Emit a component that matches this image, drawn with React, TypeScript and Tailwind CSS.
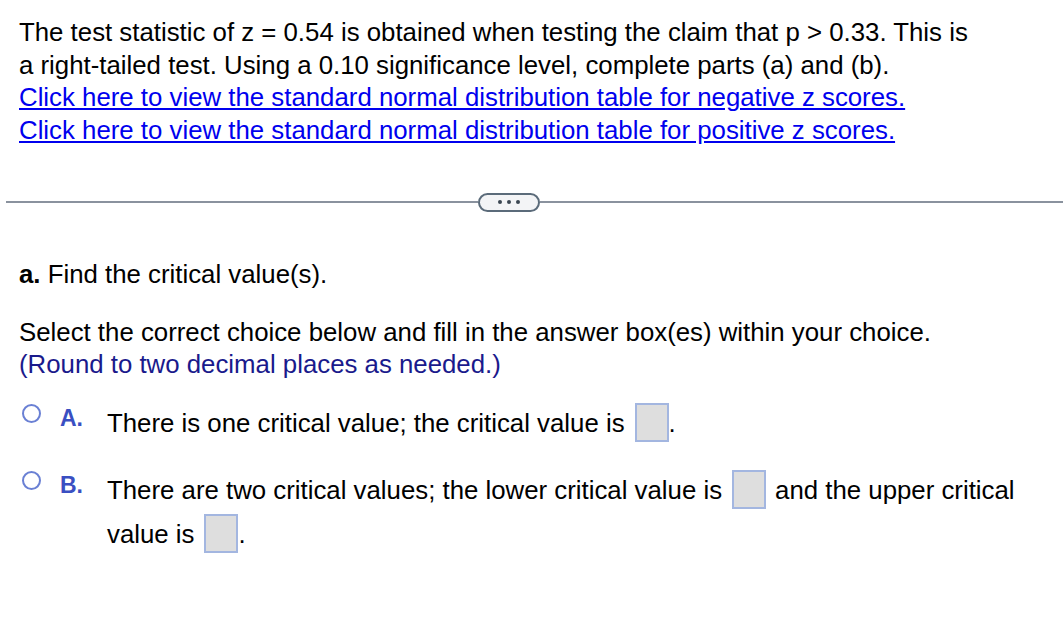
import React from "react";

const Box = ({ className = "" }: { className?: string }) => (
  <span className={`inline-block w-[34px] h-[39px] bg-[#dedede] border-2 border-[#a3b6e0] align-middle ${className}`} />
);

const Radio = () => (
  <span className="inline-block w-[19px] h-[19px] rounded-full border-[2.5px] border-[#6a80d4] bg-white mb-[18px]" />
);

const Label = ({ t }: { t: string }) => (
  <span className="ml-[19px] w-[47px] text-[#3a4fc2] font-bold text-[23px] mb-[10px]">{t}</span>
);

export default function App() {
  return (
    <div className="w-[1063px] h-[627px] bg-white overflow-hidden text-black" style={{ fontFamily: '"Liberation Sans", Arial, sans-serif' }}>
      <div className="pt-[16px] pl-[19px] text-[25.8px] leading-[32.7px]">
        <div>The test statistic of z = 0.54 is obtained when testing the claim that p &gt; 0.33. This is</div>
        <div>a right-tailed test. Using a 0.10 significance level, complete parts (a) and (b).</div>
        <div><a className="text-[#0000ee] underline">Click here to view the standard normal distribution table for negative z scores.</a></div>
        <div><a className="text-[#0000ee] underline">Click here to view the standard normal distribution table for positive z scores.</a></div>
      </div>
      <div className="mt-[46px] ml-[6px] flex items-center">
        <div className="w-[472px] h-[2px] bg-[#8a929e]" />
        <div className="w-[62px] h-[19px] rounded-full border-2 border-[#5b6b7a] bg-[#f3f4f6] flex items-center justify-center gap-[5px]">
          <span className="w-[4px] h-[4px] rounded-full bg-[#3b4652]" />
          <span className="w-[4px] h-[4px] rounded-full bg-[#3b4652]" />
          <span className="w-[4px] h-[4px] rounded-full bg-[#3b4652]" />
        </div>
        <div className="flex-1 h-[2px] bg-[#8a929e]" />
      </div>
      <div className="pl-[19px] text-[25.8px] leading-[32.7px]">
        <div className="mt-[46px]"><b>a.</b> Find the critical value(s).</div>
        <div className="mt-[25px]">Select the correct choice below and fill in the answer box(es) within your choice.</div>
        <div className="text-[#1a1a8c]">(Round to two decimal places as needed.)</div>
      </div>
      <div className="mt-[22px] pl-[22px] flex items-center h-[40px]">
        <Radio />
        <Label t="A." />
        <span className="text-[25.8px]">There is one critical value; the critical value is</span>
        <Box className="ml-[10px]" />
        <span className="text-[25.8px]">.</span>
      </div>
      <div className="mt-[27px] pl-[22px] flex items-center h-[40px]">
        <Radio />
        <Label t="B." />
        <span className="text-[25.8px]">There are two critical values; the lower critical value is</span>
        <Box className="ml-[10px]" />
        <span className="ml-[9px] text-[25.8px]">and the upper critical</span>
      </div>
      <div className="mt-[4px] pl-[107px] flex items-center h-[40px]">
        <span className="text-[25.8px]">value is</span>
        <Box className="ml-[10px]" />
        <span className="text-[25.8px]">.</span>
      </div>
    </div>
  );
}
